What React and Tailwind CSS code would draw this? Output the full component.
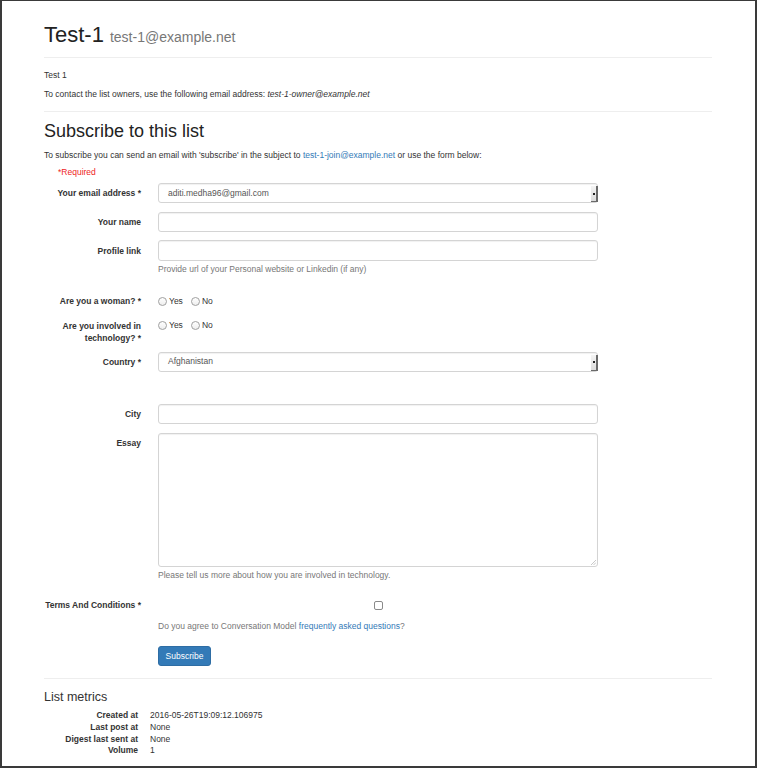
import React from 'react';

const font = { fontFamily: '"Liberation Sans", Arial, sans-serif' };

function Label({ children, className = '' }) {
  return (
    <div className={`w-[114px] shrink-0 pr-[17px] text-right font-bold text-[8.5px] leading-[12px] text-[#333] ${className}`}>
      {children}
    </div>
  );
}

function TextInput({ h = 'h-[20px]', value }) {
  return (
    <div className={`w-[440px] ${h} rounded-[3px] border border-[#d4d4d4] shadow-[inset_0_1px_1px_rgba(0,0,0,0.06)] bg-white px-[9px] flex items-center text-[8.5px] text-[#555]`}>
      {value}
    </div>
  );
}

function Select({ value }) {
  return (
    <div className="relative w-[440px] h-[20px] rounded-[3px] border border-[#d4d4d4] shadow-[inset_0_1px_1px_rgba(0,0,0,0.06)] bg-white px-[9px] flex items-center text-[8.5px] text-[#555]">
      {value}
      <span className="absolute right-[-1px] top-[2px] bottom-[0px] w-[7px] bg-gradient-to-b from-[#f4f4f4] to-[#dcdcdc] border-r-2 border-b border-[#6a6a6a] flex items-center justify-center">
        <span className="w-[2px] h-[2px] bg-[#222]" />
      </span>
    </div>
  );
}

function Radio({ label }) {
  return (
    <span className="flex items-center mr-[8px]">
      <span className="w-[9px] h-[9px] rounded-full border border-[#a0a0a0] bg-gradient-to-b from-white to-[#eee] mr-[2px]" />
      <span className="text-[8.5px] text-[#333]">{label}</span>
    </span>
  );
}

export default function App() {
  return (
    <div style={font} className="w-[757px] h-[768px] overflow-hidden border-2 border-t border-[#3a3a3a] bg-white text-[#333]">
      <div className="ml-[42px] w-[668px]">
        {/* Header */}
        <div className="pt-[20px] pb-[9px] border-b border-[#eee] flex items-baseline">
          <span className="text-[22px] leading-[27px] text-[#222]">Test-1</span>
          <span className="ml-[6px] text-[14px] text-[#777]">test-1@example.net</span>
        </div>
        <div className="pt-[8px] pb-[7px] border-b border-[#eee] text-[8.5px] leading-[19px]">
          <div>Test 1</div>
          <div>
            To contact the list owners, use the following email address: <em>test-1-owner@example.net</em>
          </div>
        </div>

        {/* Subscribe */}
        <h2 className="mt-[8px] text-[18px] leading-[22px] text-[#222]">Subscribe to this list</h2>
        <p className="mt-[7px] text-[8.5px] leading-[12px]">
          To subscribe you can send an email with 'subscribe' in the subject to{' '}
          <span className="text-[#337ab7]">test-1-join@example.net</span> or use the form below:
        </p>
        <div className="mt-[5px] ml-[14px] text-[8.5px] leading-[12px] text-[#ee1c1c]">*Required</div>

        <div className="mt-[5px] flex items-center">
          <Label>Your email address *</Label>
          <Select value="aditi.medha96@gmail.com" />
        </div>
        <div className="mt-[9px] flex items-center">
          <Label>Your name</Label>
          <TextInput />
        </div>
        <div className="mt-[8px] flex items-center">
          <Label>Profile link</Label>
          <TextInput h="h-[21px]" />
        </div>
        <div className="ml-[114px] mt-[2px] text-[8.5px] leading-[12px] text-[#777]">
          Provide url of your Personal website or Linkedin (if any)
        </div>

        <div className="mt-[20px] flex items-center">
          <Label>Are you a woman? *</Label>
          <Radio label="Yes" />
          <Radio label="No" />
        </div>
        <div className="mt-[12px] flex items-start">
          <Label>Are you involved in technology? *</Label>
          <div className="flex items-center h-[12px]">
            <Radio label="Yes" />
            <Radio label="No" />
          </div>
        </div>
        <div className="mt-[8px] flex items-center">
          <Label>Country *</Label>
          <Select value="Afghanistan" />
        </div>

        <div className="mt-[32px] flex items-center">
          <Label>City</Label>
          <TextInput />
        </div>
        <div className="mt-[9px] flex items-start">
          <Label className="pt-[4px]">Essay</Label>
          <div className="relative w-[440px] h-[134px] rounded-[3px] border border-[#d4d4d4] shadow-[inset_0_1px_1px_rgba(0,0,0,0.06)] bg-white">
            <svg className="absolute right-[1px] bottom-[1px]" width="6" height="6" viewBox="0 0 6 6">
              <path d="M1 6 L6 1 M3.5 6 L6 3.5" stroke="#bbb" strokeWidth="0.8" />
            </svg>
          </div>
        </div>
        <div className="ml-[114px] mt-[2px] text-[8.5px] leading-[12px] text-[#777]">
          Please tell us more about how you are involved in technology.
        </div>

        <div className="mt-[18px] flex items-start">
          <Label className="whitespace-nowrap">Terms And Conditions *</Label>
          <div className="w-[440px] flex justify-center pt-[2px]">
            <span className="w-[9px] h-[9px] rounded-[2px] border border-[#8a8a8a] bg-white" />
          </div>
        </div>
        <div className="ml-[114px] mt-[9px] text-[8.5px] leading-[12px] text-[#777]">
          Do you agree to Conversation Model <span className="text-[#337ab7]">frequently asked questions</span>?
        </div>
        <div className="ml-[114px] mt-[10px]">
          <button className="w-[53px] h-[20px] rounded-[3px] bg-[#337ab7] border border-[#2e6da4] text-white text-[8.5px]">
            Subscribe
          </button>
        </div>

        {/* Metrics */}
        <div className="mt-[12px] border-t border-[#eee] pt-[10px]">
          <div className="text-[12.5px] leading-[16px] text-[#333]">List metrics</div>
          <div className="mt-[5px] grid grid-cols-[94px_1fr] gap-x-[12px] text-[8.5px] leading-[11.7px]">
            <div className="text-right font-bold">Created at</div>
            <div>2016-05-26T19:09:12.106975</div>
            <div className="text-right font-bold">Last post at</div>
            <div>None</div>
            <div className="text-right font-bold">Digest last sent at</div>
            <div>None</div>
            <div className="text-right font-bold">Volume</div>
            <div>1</div>
          </div>
        </div>
      </div>
    </div>
  );
}
